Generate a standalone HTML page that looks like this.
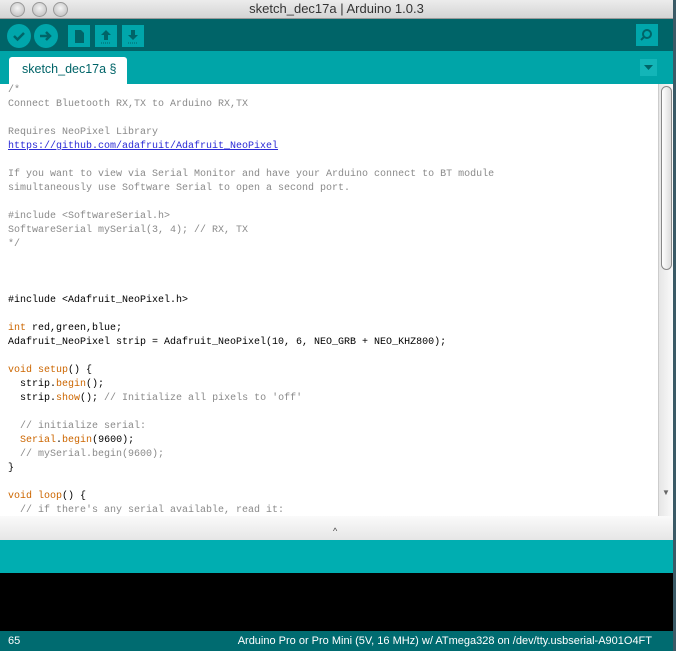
<!DOCTYPE html>
<html><head><style>
*{margin:0;padding:0;box-sizing:border-box}
body{width:676px;height:651px;overflow:hidden;background:#3a5a66;position:relative;font-family:"Liberation Sans",sans-serif}
.win{position:absolute;left:0;top:0;width:673px;height:651px;background:#fff;overflow:hidden}
.title{position:absolute;left:0;top:0;width:673px;height:19px;background:linear-gradient(#ececec,#d4d4d4);border-bottom:1px solid #999;text-align:center;font-size:13px;line-height:18px;color:#333}
.light{position:absolute;top:2px;width:15px;height:15px;border-radius:50%;background:radial-gradient(circle at 50% 40%,#f4f4f4,#b8b8b8);border:1px solid #999}
.tool{position:absolute;left:0;top:19px;width:673px;height:32px;background:#006468}
.btn{position:absolute;top:6px;width:22px;height:22px;background:#00a6ab}
.rnd{border-radius:50%}
.tabs{position:absolute;left:0;top:51px;width:673px;height:33px;background:#00a5a8}
.tab{position:absolute;left:9px;top:6px;width:118px;height:27px;background:#fff;border-radius:3px 3px 0 0;color:#006468;font-size:12.5px;line-height:24px;padding-left:13px;white-space:nowrap}
.edit{position:absolute;left:2px;top:84px;width:656px;height:432px;background:#fff;font-family:"Liberation Mono",monospace;font-size:10px;line-height:14px;color:#000;padding:0 0 0 6px;white-space:pre}
.c{color:#8a8a8a}.o{color:#cc6600}.a{color:#2b2bd6;text-decoration:underline}
.sb{position:absolute;left:658px;top:84px;width:15px;height:432px;background:linear-gradient(90deg,#e6e6e6,#fafafa);border-left:1px solid #ccc}
.thumb{position:absolute;left:2px;top:2px;width:11px;height:184px;border:1px solid #888;border-radius:6px;background:linear-gradient(90deg,#fff,#ddd)}
.div{position:absolute;left:0;top:516px;width:673px;height:24px;background:linear-gradient(#fafafa,#e6e6e6)}
.teal{position:absolute;left:0;top:540px;width:673px;height:33px;background:#00aeb1}
.black{position:absolute;left:0;top:573px;width:673px;height:58px;background:#000}
.status{position:absolute;left:0;top:631px;width:673px;height:20px;background:#006b70;color:#fff;font-size:11px;line-height:20px}
</style></head><body>
<div class="win">
<div class="title">sketch_dec17a | Arduino 1.0.3</div>
<div class="light" style="left:10px"></div><div class="light" style="left:32px"></div><div class="light" style="left:53px"></div>
<div class="tool">
 <div class="btn rnd" style="left:7px;top:5px;width:24px;height:24px"><svg width="24" height="24"><path d="M7 12l3.5 3.5L17 9" stroke="#006468" stroke-width="2.5" fill="none"/></svg></div>
 <div class="btn rnd" style="left:34px;top:5px;width:24px;height:24px"><svg width="24" height="24"><path d="M6 12h10M12 8l4 4-4 4" stroke="#006468" stroke-width="2.5" fill="none"/></svg></div>
 <div class="btn" style="left:68px"><svg width="22" height="22"><path d="M7 5h6l3 3v10H7z" fill="#006468"/></svg></div>
 <div class="btn" style="left:95px"><svg width="22" height="22"><path d="M11 5l-5 5h3v5h4v-5h3z" fill="#006468"/><path d="M6 18h10" stroke="#006468" stroke-dasharray="1 1"/></svg></div>
 <div class="btn" style="left:122px"><svg width="22" height="22"><path d="M11 15l-5-5h3V5h4v5h3z" fill="#006468"/><path d="M6 18h10" stroke="#006468" stroke-dasharray="1 1"/></svg></div>
 <div class="btn" style="left:636px;top:5px"><svg width="22" height="22"><circle cx="11" cy="10" r="4" stroke="#006468" stroke-width="2" fill="none"/><path d="M8 13l-3 3" stroke="#006468" stroke-width="2"/></svg></div>
</div>
<div class="tabs"><div class="tab">sketch_dec17a §</div>
 <div style="position:absolute;left:640px;top:8px;width:17px;height:17px;background:#13b5b8"><svg width="17" height="17"><path d="M4 6h9l-4.5 5z" fill="#006468"/></svg></div></div>
<div class="edit"><span class="c">/*
Connect Bluetooth RX,TX to Arduino RX,TX

Requires NeoPixel Library
</span><span class="a">https://github.com/adafruit/Adafruit_NeoPixel</span><span class="c">

If you want to view via Serial Monitor and have your Arduino connect to BT module
simultaneously use Software Serial to open a second port.

#include &lt;SoftwareSerial.h&gt;
SoftwareSerial mySerial(3, 4); // RX, TX
*/</span>



#include &lt;Adafruit_NeoPixel.h&gt;

<span class="o">int</span> red,green,blue;
Adafruit_NeoPixel strip = Adafruit_NeoPixel(10, 6, NEO_GRB + NEO_KHZ800);

<span class="o">void</span> <span class="o">setup</span>() {
  strip.<span class="o">begin</span>();
  strip.<span class="o">show</span>(); <span class="c">// Initialize all pixels to 'off'</span>

  <span class="c">// initialize serial:</span>
  <span class="o">Serial</span>.<span class="o">begin</span>(9600);
  <span class="c">// mySerial.begin(9600);</span>
}

<span class="o">void</span> <span class="o">loop</span>() {
  <span class="c">// if there's any serial available, read it:</span></div>
<div class="sb"><div class="thumb"></div><div style="position:absolute;left:3px;top:404px;font-size:8px;color:#666">▼</div></div>
<div class="div"><div style="position:absolute;left:333px;top:10px;font-size:9px;color:#444">^</div></div>
<div class="teal"></div>
<div class="black"></div>
<div class="status"><span style="position:absolute;left:8px">65</span><span style="position:absolute;right:21px">Arduino Pro or Pro Mini (5V, 16 MHz) w/ ATmega328 on /dev/tty.usbserial-A901O4FT</span></div>
</div>
</body></html>
